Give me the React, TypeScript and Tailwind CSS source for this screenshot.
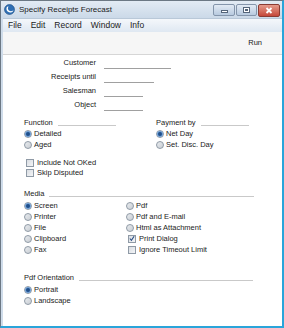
import React from 'react';

function Radio({ checked }: { checked?: boolean }) {
    return (
        <span className="w-[8px] h-[8px] rounded-full border border-[#8f9aa6] bg-gradient-to-br from-[#e8ebee] to-[#c9ced4] flex items-center justify-center shrink-0">
            {checked && <span className="w-[4px] h-[4px] rounded-full bg-[#1f4f8a] shadow-[0_0_0_1px_#6e9fd6]" />}
        </span>
    );
}

function Check({ checked }: { checked?: boolean }) {
    return (
        <span className="w-[8px] h-[8px] border border-[#8f9aa6] bg-gradient-to-br from-[#d9dde2] to-[#f4f5f7] flex items-center justify-center shrink-0">
            {checked && (
                <svg width="7" height="7" viewBox="0 0 7 7">
                    <path d="M1 3.5 L2.8 5.6 L6 0.8" stroke="#2a4f86" strokeWidth="1.3" fill="none" />
                </svg>
            )}
        </span>
    );
}

function RadioRow({ label, checked }: { label: string; checked?: boolean }) {
    return (
        <div className="h-[11px] flex items-center gap-[2px]">
            <Radio checked={checked} />
            <span>{label}</span>
        </div>
    );
}

function CheckRow({ label, checked, h = 'h-[10px]' }: { label: string; checked?: boolean; h?: string }) {
    return (
        <div className={`${h} flex items-center gap-[3px] pl-[2px]`}>
            <Check checked={checked} />
            <span>{label}</span>
        </div>
    );
}

function Header({ label, w }: { label: string; w: string }) {
    return (
        <div className={`${w} h-[10px] flex items-center gap-[5px]`}>
            <span>{label}</span>
            <div className="flex-1 h-px bg-[#c9c9c9] mt-[4px]" />
        </div>
    );
}

function Field({ label, w }: { label: string; w: string }) {
    return (
        <div className="h-[14px] flex items-center">
            <span className="w-[93px] text-right">{label}</span>
            <div className={`${w} ml-[8px] h-px bg-[#a0a0a0] mt-[10px]`} />
        </div>
    );
}

export default function App() {
    return (
        <div className="w-[284px] h-[328px] flex flex-col overflow-hidden border-l border-t border-[#6c7884] border-r-[2px] border-r-[#2aa5da] border-b-[2px] border-b-[#2aa5da] text-[#1b1b1b] font-['Liberation_Sans',Arial,sans-serif]">
            {/* title bar */}
            <div className="h-[17px] shrink-0 flex items-center bg-gradient-to-b from-[#e3ebf4] to-[#cbd9e8] pl-[3px] pr-[2px]">
                <svg width="11" height="11" viewBox="0 0 11 11" className="shrink-0">
                    <circle cx="5.5" cy="5.5" r="5" fill="#2f6fb4" stroke="#1d4d85" strokeWidth="0.6" />
                    <path d="M3 2.8 C1.6 5.2 3 8.6 6.6 8.4 C8.4 8.3 9.2 7.2 9.4 6.2 C8 7.6 5 7.6 4.2 5.6 C3.7 4.4 3.9 3.5 4.6 2.6 Z" fill="#ffffff" />
                </svg>
                <span className="ml-[4px] text-[8px]">Specify Receipts Forecast</span>
                <div className="ml-auto flex items-start gap-[1px] self-start mt-[3px]">
                    <div className="w-[22px] h-[12px] rounded-[2px] border border-[#8495ab] bg-gradient-to-b from-[#e2eaf4] to-[#b8cadf] flex items-center justify-center">
                        <div className="w-[7px] h-[3px] bg-white border border-[#55657a] mt-[2px]" />
                    </div>
                    <div className="w-[21px] h-[12px] rounded-[2px] border border-[#8495ab] bg-gradient-to-b from-[#e2eaf4] to-[#b8cadf] flex items-center justify-center">
                        <div className="w-[7px] h-[6px] border border-[#55657a] bg-white flex items-center justify-center">
                            <div className="w-[3px] h-[2px] border border-[#55657a]" />
                        </div>
                    </div>
                    <div className="w-[22px] h-[13px] rounded-[2px] border border-[#8a3b33] bg-gradient-to-b from-[#e59a8c] to-[#c4473a] flex items-center justify-center">
                        <svg width="8" height="7" viewBox="0 0 8 7">
                            <path d="M1.5 1 L6.5 6 M6.5 1 L1.5 6" stroke="#ffffff" strokeWidth="1.8" />
                        </svg>
                    </div>
                </div>
            </div>

            <div className="flex-1 flex flex-col bg-white border-l-[2px] border-[#cfdcea]">
                {/* menu */}
                <div className="h-[14px] shrink-0 flex items-center gap-[9px] pl-[5px] text-[8.5px] bg-gradient-to-b from-[#f4f7fb] to-[#dfe8f2] border-t border-[#b9c8d8]">
                    <span>File</span>
                    <span>Edit</span>
                    <span>Record</span>
                    <span>Window</span>
                    <span>Info</span>
                </div>
                {/* toolbar */}
                <div className="h-[23px] shrink-0 flex items-center justify-end pr-[20px] bg-[#f6f6f6] border-b border-[#d6d6d6] text-[7.5px]">
                    <span>Run</span>
                </div>

                {/* content */}
                <div className="flex-1 flex flex-col pt-[1px] text-[7.5px] leading-none">
                    <Field label="Customer" w="w-[67px]" />
                    <Field label="Receipts until" w="w-[50px]" />
                    <Field label="Salesman" w="w-[39px]" />
                    <Field label="Object" w="w-[39px]" />

                    <div className="flex mt-[6px] pl-[21px]">
                        <div className="w-[132px] flex flex-col">
                            <Header label="Function" w="w-[92px]" />
                            <RadioRow label="Detailed" checked />
                            <RadioRow label="Aged" />
                            <div className="mt-[8px]">
                                <CheckRow label="Include Not OKed" />
                                <CheckRow label="Skip Disputed" />
                            </div>
                        </div>
                        <div className="flex flex-col">
                            <Header label="Payment by" w="w-[93px]" />
                            <RadioRow label="Net Day" checked />
                            <RadioRow label="Set. Disc. Day" />
                        </div>
                    </div>

                    <div className="flex flex-col mt-[11px] pl-[21px]">
                        <Header label="Media" w="w-[230px]" />
                        <div className="flex mt-[1px]">
                            <div className="w-[102px] flex flex-col">
                                <RadioRow label="Screen" checked />
                                <RadioRow label="Printer" />
                                <RadioRow label="File" />
                                <RadioRow label="Clipboard" />
                                <RadioRow label="Fax" />
                            </div>
                            <div className="flex flex-col">
                                <RadioRow label="Pdf" />
                                <RadioRow label="Pdf and E-mail" />
                                <RadioRow label="Html as Attachment" />
                                <CheckRow label="Print Dialog" checked h="h-[11px]" />
                                <CheckRow label="Ignore Timeout Limit" h="h-[11px]" />
                            </div>
                        </div>
                    </div>

                    <div className="flex flex-col mt-[18px] pl-[21px]">
                        <Header label="Pdf Orientation" w="w-[229px]" />
                        <div className="flex flex-col mt-[1px]">
                            <RadioRow label="Portrait" checked />
                            <RadioRow label="Landscape" />
                        </div>
                    </div>
                </div>
            </div>
        </div>
    );
}
